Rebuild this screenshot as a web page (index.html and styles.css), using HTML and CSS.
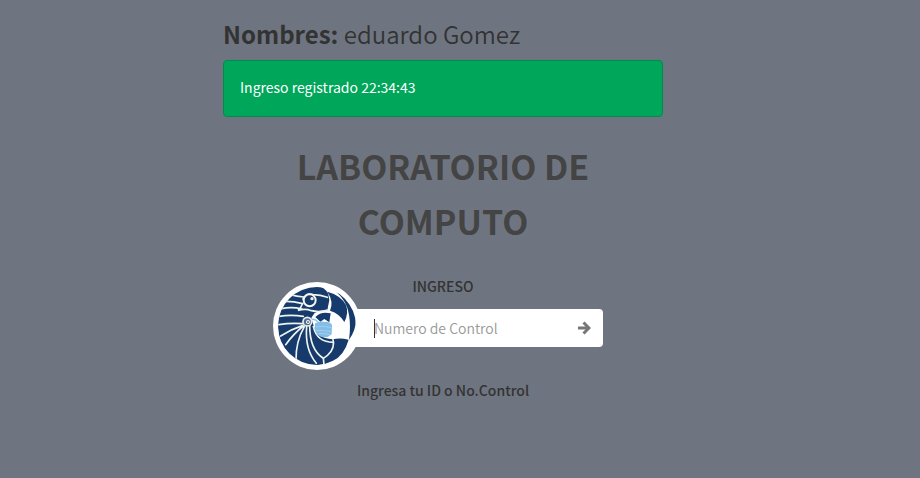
FILE: index.html
```html
<!DOCTYPE html>
<html lang="es">
<head>
<meta charset="utf-8">
<meta name="viewport" content="width=device-width, initial-scale=1">
<title>Laboratorio de Computo</title>
<link rel="stylesheet" href="styles.css">
</head>
<body>
<main class="lockscreen">
  <h2 class="person"><b>Nombres:</b> eduardo Gomez</h2>
  <div class="alert" role="status">Ingreso registrado 22:34:43</div>
  <h1 class="title">LABORATORIO DE COMPUTO</h1>
  <label class="caption" for="control">INGRESO</label>
  <form class="entry">
    <div class="avatar">
      <svg viewBox="39 36 234 234" aria-hidden="true">
        <rect x="39" y="36" width="234" height="234" fill="#fff"/>
        <path fill="#163a6c" d="M39 160C37 108 66 60 108 43Q134 32 168 36Q184 43 190 57L193 76Q189 94 187 107Q168 103 149 114L139 128Q146 158 158 177Q176 192 204 193Q224 187 251 194Q237 242 204 257Q145 286 93 255Q43 224 39 160Z"/>
        <path fill="#163a6c" d="M187 50Q226 60 243 90Q252 114 238 141Q224 116 195 107Q207 80 187 50Z"/>
        <path fill="#163a6c" d="M200 40Q251 58 270 112Q280 157 252 194Q260 137 246 96Q232 62 200 40Z"/>
        <path fill="#163a6c" d="M151 126Q168 108 197 115L193 142L178 132L166 140Z"/>
        <g fill="none" stroke="#edf3ef" stroke-width="5" stroke-linecap="round">
          <path d="M76 59Q95 65 116 66M62 79Q87 79 113 86M50 101Q79 94 111 102M42 124Q78 118 115 124M41 149Q77 143 114 146"/>
          <path d="M114 72Q124 53 144 59Q167 59 187 67M112 87Q108 99 99 106Q122 100 139 107Q164 113 188 105"/>
          <path d="M112 152Q78 163 47 183M115 153Q85 177 62 209M118 155Q92 200 93 256M125 155Q119 223 154 265M134 151Q134 225 175 250M145 155Q156 202 205 202"/>
          <path d="M204 194Q212 227 175 250L177 269"/>
        </g>
        <circle cx="134" cy="76" r="18" fill="#163a6c" stroke="#f4f7f2" stroke-width="6"/>
        <circle cx="141" cy="71" r="5" fill="#edf2ef"/>
        <path d="M139 134Q149 129 160 142L198 148M151 160L162 177" fill="none" stroke="#8dc2e7" stroke-width="4"/>
        <path fill="#83bde8" d="M150 145Q166 137 180 141Q192 138 201 149L200 178Q188 190 170 186Q156 181 150 166Z"/>
        <path d="M153 156Q176 151 199 158M153 167Q177 164 198 170M161 176Q181 173 195 179" fill="none" stroke="#aed7f2" stroke-width="2"/>
        <circle cx="127" cy="140" r="13" fill="#536b8d" stroke="#e7edeb" stroke-width="5"/>
        <circle cx="129" cy="141" r="5" fill="#7f91a8" stroke="#e0e8eb" stroke-width="3"/>
      </svg>
    </div>
    <input class="field" id="control" type="text" placeholder="Numero de Control" autofocus>
    <button class="send" type="button" aria-label="Ingresar">
      <svg viewBox="0 0 14 14" aria-hidden="true"><path d="M1 7H12M6.500 1.500L12 7L6.500 12.500"/></svg>
    </button>
  </form>
  <p class="help">Ingresa tu ID o No.Control</p>
</main>
</body>
</html>
```
FILE: styles.css
```css
* { box-sizing: border-box; }

body {
  margin: 0;
  padding: 19px 34px 20px 0;
  min-height: 100vh;
  background: #6f7580;
  color: #333;
  font: 14px/20px "Noto Sans CJK JP", "Open Sans", sans-serif;
}

.lockscreen {
  width: 100%;
  max-width: 440px;
  margin: 0 auto;
  display: flex;
  flex-direction: column;
}

.person {
  margin: 0 0 11px;
  font-size: 24px;
  line-height: 30px;
  font-weight: 350;
}

.person b { font-weight: 700; }

.alert {
  padding: 16px 16px 18px;
  border: 1px solid #008d4c;
  border-radius: 4px;
  background: #00a65a;
  color: #fff;
  line-height: 21px;
}

.title {
  width: 100%;
  max-width: 360px;
  margin: 21px auto 28px;
  color: #444;
  font-size: 34px;
  line-height: 55px;
  font-weight: 700;
  text-align: center;
}

.caption,
.help {
  margin: 0;
  font-weight: 500;
  text-align: center;
}

.entry {
  position: relative;
  display: flex;
  width: 100%;
  max-width: 320px;
  height: 38px;
  margin: 13px auto 33px;
  padding-left: 91px;
  border-radius: 4px;
  background: #fff;
}

.avatar {
  position: absolute;
  left: -10px;
  top: -27px;
  width: 88px;
  height: 88px;
  padding: 5px;
  border-radius: 50%;
  background: #fff;
}

.avatar svg {
  display: block;
  width: 100%;
  height: 100%;
  border-radius: 50%;
}

.field {
  flex: 1;
  min-width: 0;
  padding: 0;
  border: 0;
  outline: 0;
  background: linear-gradient(#333, #333) left center / 1px 19px no-repeat;
  caret-color: transparent;
  color: #333;
  font: inherit;
  font-weight: 350;
}

.field::placeholder { color: #999; opacity: 1; }

.send {
  width: 38px;
  padding: 0;
  border: 0;
  background: transparent;
}

.send svg {
  display: block;
  width: 14px;
  height: 14px;
  margin: 0 auto;
  fill: none;
  stroke: #777;
  stroke-width: 3;
}
```
